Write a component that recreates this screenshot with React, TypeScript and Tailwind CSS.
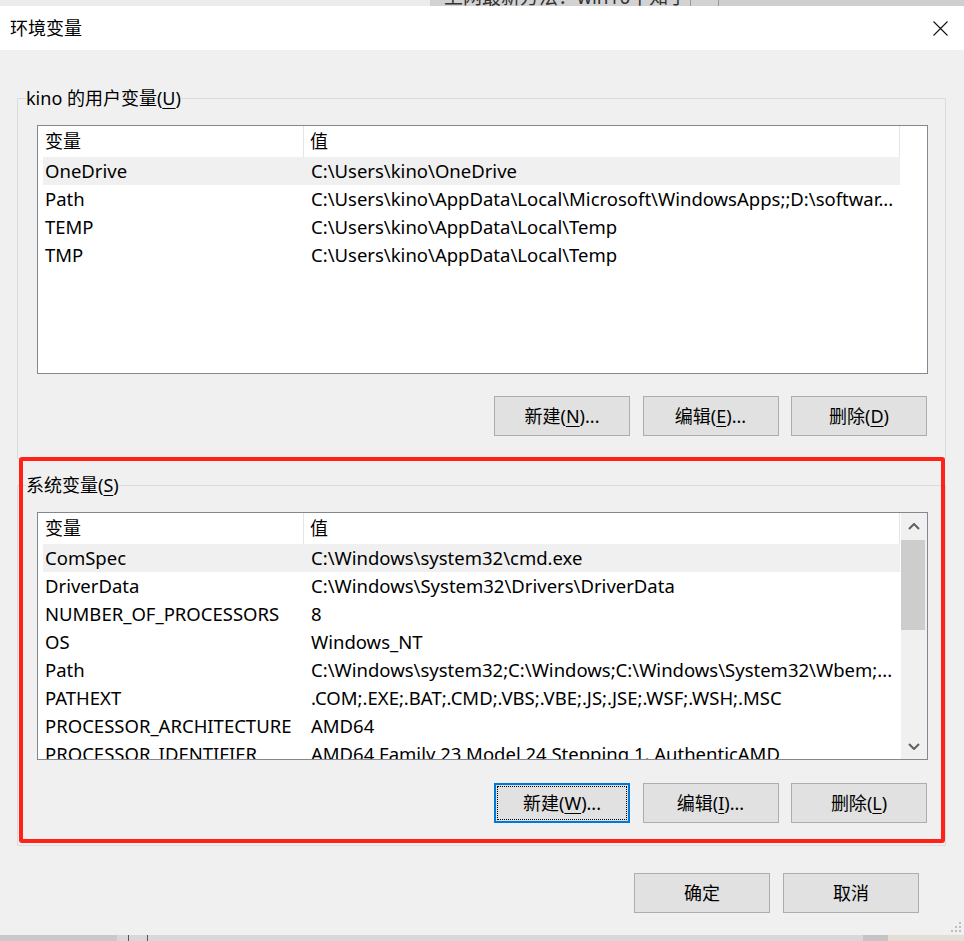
import React from 'react';

type Row = [string, string];

const userVars: Row[] = [
  ['OneDrive', 'C:\\Users\\kino\\OneDrive'],
  ['Path', 'C:\\Users\\kino\\AppData\\Local\\Microsoft\\WindowsApps;;D:\\softwar...'],
  ['TEMP', 'C:\\Users\\kino\\AppData\\Local\\Temp'],
  ['TMP', 'C:\\Users\\kino\\AppData\\Local\\Temp'],
];

const systemVars: Row[] = [
  ['ComSpec', 'C:\\Windows\\system32\\cmd.exe'],
  ['DriverData', 'C:\\Windows\\System32\\Drivers\\DriverData'],
  ['NUMBER_OF_PROCESSORS', '8'],
  ['OS', 'Windows_NT'],
  ['Path', 'C:\\Windows\\system32;C:\\Windows;C:\\Windows\\System32\\Wbem;...'],
  ['PATHEXT', '.COM;.EXE;.BAT;.CMD;.VBS;.VBE;.JS;.JSE;.WSF;.WSH;.MSC'],
  ['PROCESSOR_ARCHITECTURE', 'AMD64'],
  ['PROCESSOR_IDENTIFIER', 'AMD64 Family 23 Model 24 Stepping 1, AuthenticAMD'],
];

function Chevron({ down }: { down?: boolean }) {
  return (
    <svg width="12" height="7" viewBox="0 0 12 7" fill="none">
      <path
        d={down ? 'M1 1 L6 6 L11 1' : 'M1 6 L6 1 L11 6'}
        stroke="#606060"
        strokeWidth="2"
      />
    </svg>
  );
}

function Scrollbar() {
  return (
    <div className="flex w-[27px] shrink-0 flex-col border-l border-white bg-[#f0f0f0]">
      <div className="flex h-[27px] items-center justify-center">
        <Chevron />
      </div>
      <div className="h-[90px] w-[24px] bg-[#cdcdcd]" />
      <div className="flex-1" />
      <div className="flex h-[26px] items-center justify-center">
        <Chevron down />
      </div>
    </div>
  );
}

function VarList({ rows, scroll, height }: { rows: Row[]; scroll?: boolean; height: string }) {
  return (
    <div className={`flex w-[891px] overflow-hidden border border-[#828790] bg-white text-[18.5px] ${height}`}>
      <div className="flex w-[862px] shrink-0 flex-col">
        <div className="flex h-[31px] shrink-0 text-[18px]">
          <div className="flex w-[266px] items-center border-r border-[#e5e5e5] pl-[7px]">变量</div>
          <div className="flex flex-1 items-center border-r border-[#e5e5e5] pl-[6px]">值</div>
        </div>
        {rows.map((r, i) => (
          <div
            key={r[0]}
            className={`ml-[5px] flex h-[28px] shrink-0 items-center ${i === 0 ? 'bg-[#f0f0f0]' : ''}`}
          >
            <div className="w-[266px] shrink-0 whitespace-nowrap pl-[2px]">{r[0]}</div>
            <div className="flex-1 overflow-hidden whitespace-nowrap pl-[2px]">{r[1]}</div>
          </div>
        ))}
      </div>
      {scroll ? <Scrollbar /> : null}
    </div>
  );
}

function Btn({ label, k, tail, focused }: { label: string; k?: string; tail?: string; focused?: boolean }) {
  const text = (
    <span className="whitespace-nowrap">
      {label}
      {k ? (
        <>
          (<span className="underline decoration-1 underline-offset-[3px]">{k}</span>){tail}
        </>
      ) : null}
    </span>
  );
  if (focused) {
    return (
      <div className="h-[40px] w-[136px] border-2 border-[#0078d7] bg-[#e1e1e1] p-px">
        <div className="flex h-full w-full items-center justify-center border border-dotted border-black">
          {text}
        </div>
      </div>
    );
  }
  return (
    <div className="flex h-[40px] w-[136px] items-center justify-center border border-[#adadad] bg-[#e1e1e1]">
      {text}
    </div>
  );
}

function Group({
  legend,
  k,
  children,
}: {
  legend: string;
  k: string;
  children: React.ReactNode;
}) {
  return (
    <fieldset className="border border-[#dcdcdc] px-0">
      <legend className="ml-[8px] h-[24px] whitespace-nowrap leading-[24px]">
        {legend}(<span className="underline decoration-1 underline-offset-[3px]">{k}</span>)
      </legend>
      <div className="flex flex-col pl-[19px] pr-[17px] pb-[22px] pt-[15px]">{children}</div>
    </fieldset>
  );
}

export default function App() {
  return (
    <div className="relative flex h-[941px] w-[964px] flex-col overflow-hidden bg-[#f0f0f0] font-['Noto_Sans','Noto_Sans_CJK_SC',sans-serif] text-[18px] text-black">
      {/* window behind the dialog */}
      <div className="flex h-[6px] shrink-0 items-end overflow-hidden bg-[#e6e6e6]">
        <div className="h-full w-[430px] bg-[#ececec]" />
        <div className="flex h-full w-[260px] items-end overflow-hidden bg-[#d2d2d2] pl-[14px] text-[19px] leading-[17px] text-[#333]">
          上网最新方法：win10十知乎
        </div>
        <div className="h-full w-[28px] border-l border-[#9a9a9a] bg-[#d2d2d2]" />
        <div className="h-full flex-1 border-l border-[#9a9a9a] bg-[#cfcfcf]" />
      </div>

      {/* title bar */}
      <div className="flex h-[44px] shrink-0 items-center justify-between bg-white pl-[10px] pr-[16px]">
        <span className="text-[18px]">环境变量</span>
        <svg width="15" height="15" viewBox="0 0 15 15">
          <path d="M0.5 0.5 L14.5 14.5 M14.5 0.5 L0.5 14.5" stroke="#111" strokeWidth="1.1" />
        </svg>
      </div>

      <div className="flex flex-1 flex-col pl-[17px] pr-[18px] pt-[36px]">
        <Group legend="kino 的用户变量" k="U">
          <VarList rows={userVars} height="h-[249px]" />
          <div className="mt-[22px] flex justify-end gap-[12.5px] pr-px">
            <Btn label="新建" k="N" tail="..." />
            <Btn label="编辑" k="E" tail="..." />
            <Btn label="删除" k="D" />
          </div>
        </Group>

        <div className="mt-[14px]">
          <Group legend="系统变量" k="S">
            <VarList rows={systemVars} scroll height="h-[248px]" />
            <div className="mt-[23px] flex justify-end gap-[12.5px] pr-px">
              <Btn label="新建" k="W" tail="..." focused />
              <Btn label="编辑" k="I" tail="..." />
              <Btn label="删除" k="L" />
            </div>
          </Group>
        </div>

        <div className="mt-[27px] flex justify-end gap-[13px] pr-[27px]">
          <Btn label="确定" />
          <Btn label="取消" />
        </div>

        <div className="-mr-[16px] flex flex-1 items-end justify-end pb-[2px]">
          <svg width="11" height="11" viewBox="0 0 11 11" fill="#bcbcbc">
            <rect x="8" y="0" width="2" height="2" />
            <rect x="8" y="4" width="2" height="2" />
            <rect x="4" y="4" width="2" height="2" />
            <rect x="8" y="8" width="2" height="2" />
            <rect x="4" y="8" width="2" height="2" />
            <rect x="0" y="8" width="2" height="2" />
          </svg>
        </div>
      </div>

      {/* taskbar-ish strip below */}
      <div className="flex h-[6px] shrink-0 bg-[#d8d8d8]">
        <div className="h-full w-[117px] bg-[#c9c9c9]" />
        <div className="ml-[11px] h-full w-px bg-[#555]" />
        <div className="ml-[18px] h-full w-px bg-[#555]" />
        <div className="ml-auto h-full w-[25px] bg-[#c4c4c4]" />
        <div className="h-full w-[76px] bg-[#e4ddd6]" />
      </div>

      {/* red annotation frame */}
      <div className="pointer-events-none absolute left-[19px] top-[457px] h-[386px] w-[926px] rounded-[3px] border-4 border-[#fe2218]" />
    </div>
  );
}
